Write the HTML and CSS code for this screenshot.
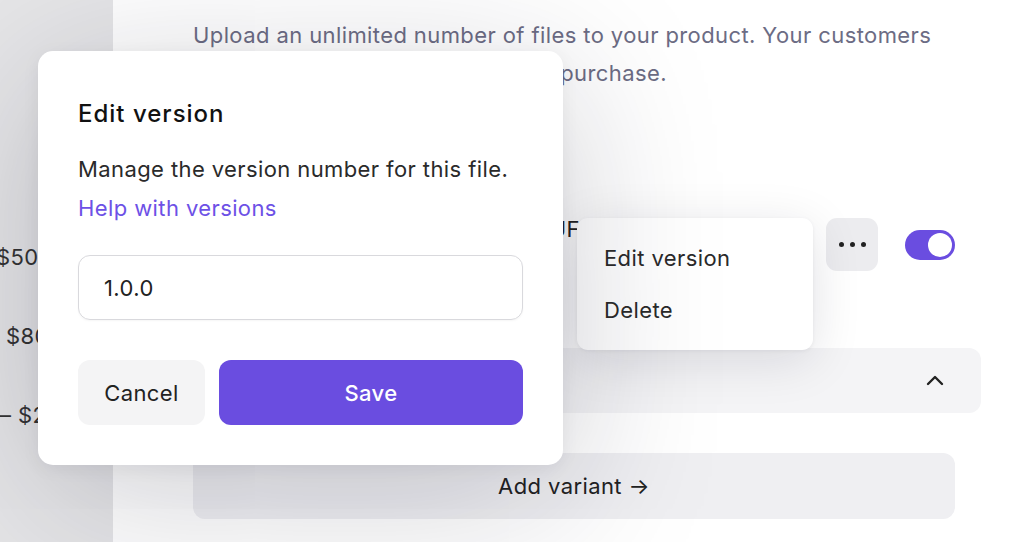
FILE: index.html
```html
<!DOCTYPE html>
<html lang="en">
<head>
<meta charset="utf-8">
<title>Edit version</title>
<link rel="stylesheet" href="styles.css">
</head>
<body>
<div class="page">
  <aside class="sidebar">
    <div class="price p1">$500 – $1,000</div>
    <div class="price p2">$800 – $2,000</div>
    <div class="price p3">— $2,500</div>
  </aside>
  <main class="main">
    <p class="intro">Upload an unlimited number of files to your product. Your customers will have full access to them after purchase.</p>
    <div class="file-row">
      <div class="file-name">COURSE_MATERIALS_BUNDLE_UF</div>
      <div class="row-spacer"></div>
      <button class="more-btn" aria-label="More">
        <span class="dot"></span><span class="dot"></span><span class="dot"></span>
      </button>
      <span class="toggle"><span class="knob"></span></span>
    </div>
    <div class="accordion">
      <svg class="chevron" width="18" height="11" viewBox="0 0 18 11"><polyline points="2,9 9,2 16,9" fill="none" stroke="#222" stroke-width="2.4" stroke-linecap="round" stroke-linejoin="round"/></svg>
    </div>
    <button class="add-variant">Add variant →</button>

    <div class="menu">
      <div class="menu-item">Edit version</div>
      <div class="menu-item">Delete</div>
    </div>
  </main>

  <div class="modal">
    <h2 class="modal-title">Edit version</h2>
    <div class="modal-desc">
      <p>Manage the version number for this file.</p>
      <a class="help-link" href="#">Help with versions</a>
    </div>
    <div class="input">1.0.0</div>
    <div class="actions">
      <button class="btn btn-cancel">Cancel</button>
      <button class="btn btn-save">Save</button>
    </div>
  </div>
</div>
</body>
</html>
```

FILE: styles.css
```css
* { box-sizing: border-box; }
html, body { margin: 0; padding: 0; }
body {
  font-family: Inter, "Noto Sans", "Liberation Sans", sans-serif;
  width: 1024px;
  height: 542px;
  overflow: hidden;
  background: #ffffff;
  color: #222;
  letter-spacing: 0.4px;
}
button { letter-spacing: inherit; }
.page {
  position: relative;
  display: flex;
  width: 1024px;
  height: 542px;
  overflow: hidden;
}
.sidebar {
  width: 113px;
  flex: none;
  background: #e6e6e8;
  overflow: hidden;
  white-space: nowrap;
  padding-top: 244px;
  display: flex;
  flex-direction: column;
  gap: 53px;
  font-size: 22px;
  line-height: 26px;
  color: #333;
}
.price.p1 { margin-left: -4px; }
.price.p2 { margin-left: 6px; }
.price.p3 { margin-left: -11px; }

.main {
  position: relative;
  flex: 1;
  background: #ffffff;
  padding: 16px 69px 0 80px;
  display: flex;
  flex-direction: column;
}
.intro {
  margin: 0;
  font-size: 22px;
  line-height: 38px;
  color: #6c6c84;
}
.file-row {
  margin-top: 126px;
  height: 53px;
  display: flex;
  align-items: center;
}
.file-name {
  width: 387px;
  flex: none;
  align-self: flex-start;
  text-align: right;
  font-size: 22px;
  line-height: 22px;
  color: #222;
  white-space: nowrap;
  overflow: hidden;
}
.row-spacer { flex: 1; }
.more-btn {
  width: 52px;
  height: 53px;
  border: 0;
  border-radius: 11px;
  background: #ececef;
  display: flex;
  align-items: center;
  justify-content: center;
  gap: 6px;
  padding: 0;
  margin-right: 27px;
}
.dot {
  width: 5px;
  height: 5px;
  border-radius: 50%;
  background: #222;
}
.toggle {
  width: 50px;
  height: 30px;
  border-radius: 15px;
  background: #6a4de0;
  display: flex;
  align-items: center;
  justify-content: flex-end;
  padding: 3px;
}
.knob {
  width: 24px;
  height: 24px;
  border-radius: 50%;
  background: #fff;
}
.accordion {
  margin-top: 77px;
  margin-right: -26px;
  height: 65px;
  border-radius: 12px;
  background: #f4f4f6;
  display: flex;
  align-items: center;
  justify-content: flex-end;
  padding-right: 37px;
}
.add-variant {
  margin-top: 40px;
  height: 66px;
  border: 0;
  border-radius: 12px;
  background: #efeff2;
  font-family: inherit;
  font-size: 22px;
  color: #222;
  width: 100%;
}
.menu {
  position: absolute;
  left: 464px;
  top: 218px;
  width: 236px;
  padding: 14px 0;
  background: #fff;
  border-radius: 11px;
  box-shadow: 0 10px 50px rgba(20, 20, 40, 0.12), 0 1px 4px rgba(20, 20, 40, 0.06);
}
.menu-item {
  height: 52px;
  line-height: 52px;
  padding-left: 27px;
  font-size: 22px;
  color: #2a2a2a;
}

.modal {
  position: absolute;
  left: 38px;
  top: 51px;
  width: 525px;
  height: 414px;
  background: #fff;
  border-radius: 15px;
  padding: 48px 40px 40px;
  box-shadow: 0 30px 160px rgba(20, 20, 40, 0.22), 0 4px 18px rgba(20, 20, 40, 0.06);
  display: flex;
  flex-direction: column;
}
.modal-title {
  margin: 0;
  font-size: 24px;
  line-height: 30px;
  font-weight: 500;
  letter-spacing: 1px;
  color: #111;
}
.modal-desc {
  margin-top: 21px;
  font-size: 22px;
  line-height: 39px;
  color: #2a2a2a;
}
.modal-desc p { margin: 0; }
.help-link {
  display: block;
  color: #6d51e6;
  text-decoration: none;
}
.input {
  margin-top: 27px;
  height: 65px;
  border: 1.5px solid #d9d9dd;
  border-radius: 12px;
  padding: 0 25px;
  display: flex;
  align-items: center;
  font-size: 22px;
  color: #222;
  box-shadow: 0 1px 2px rgba(0,0,0,0.04);
}
.actions {
  margin-top: 40px;
  display: flex;
  gap: 14px;
}
.btn {
  height: 65px;
  border: 0;
  border-radius: 12px;
  font-family: inherit;
  font-size: 22px;
}
.btn-cancel {
  width: 127px;
  background: #f4f4f5;
  color: #222;
}
.btn-save {
  flex: 1;
  background: #6a4de0;
  color: #fff;
  font-weight: 500;
}
```
